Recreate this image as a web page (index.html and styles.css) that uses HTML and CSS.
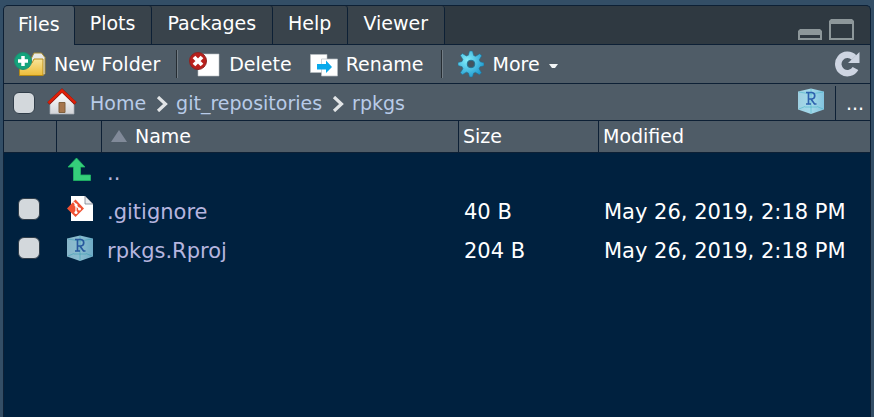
FILE: index.html
```html
<!DOCTYPE html>
<html lang="en">
<head>
<meta charset="utf-8">
<title>Files</title>
<link rel="stylesheet" href="styles.css">
</head>
<body>
<svg class="defs" width="0" height="0" aria-hidden="true">
  <defs>
    <linearGradient id="cube" x1="0" x2="1"><stop offset="0" stop-color="#9fd0e2"/><stop offset=".5" stop-color="#a3d9ea"/><stop offset="1" stop-color="#82c3de"/></linearGradient>
    <symbol id="project" viewBox="0 0 26 26">
      <path d="M13 0.500 26 3.500V21.500L13 26 0 21.500V3.500Z" fill="url(#cube)"/>
      <path d="M1 4 13 6 25 4M1 21 7 18.500M25 21 19 18.500M13 1V25.500M7 19h12" fill="none" stroke="#3fb3c4" stroke-width=".7" opacity=".75"/>
      <path d="M8 4.500H14a3.300 3.300 0 0 1 0 6.500H10.500M10.500 4.500V16M8 16h5M13 11l3.500 5H18.500" fill="none" stroke="#2e62ae" stroke-width="1.700"/>
    </symbol>
  </defs>
</svg>
<main class="pane">
  <header class="tabs">
    <div class="tablist" role="tablist">
      <button class="tab active" role="tab" aria-selected="true">Files</button>
      <button class="tab" role="tab">Plots</button>
      <button class="tab" role="tab">Packages</button>
      <button class="tab" role="tab">Help</button>
      <button class="tab" role="tab">Viewer</button>
    </div>
    <div class="window-buttons">
      <button aria-label="Minimize"><svg width="24" height="22" viewBox="0 0 24 22"><path d="M0 22V13l2-2H22l2 2V22Z" fill="#8d979a"/><path d="M2 17H22V20H2Z" fill="#2f3941"/></svg></button>
      <button aria-label="Maximize"><svg width="25" height="22" viewBox="0 0 25 22"><path d="M0 22V3l2-2H23l2 2V22Z" fill="#8d979a"/><path d="M2 6H23V20H2Z" fill="#2f3941"/></svg></button>
    </div>
  </header>

  <div class="toolbar" role="toolbar">
    <button class="tool">
      <svg width="33" height="26" viewBox="0 0 33 26">
        <defs><linearGradient id="folder" x2="0" y2="1"><stop stop-color="#f8e49a"/><stop offset="1" stop-color="#edbc38"/></linearGradient></defs>
        <path d="M17 8 20 2H27.500l3.500 4.500V22.500l-2 2H17Z" fill="#e7e8e5" stroke="#a58a31"/>
        <path d="M5.500 12H18L20 8H29V24.500H5.500Z" fill="url(#folder)" stroke="#b58a16"/>
        <circle cx="9" cy="10" r="8.500" fill="#14a37c" stroke="#208c70"/>
        <path d="M9 5V15M4 10H14" stroke="#fff" stroke-width="3.500"/>
      </svg><span>New Folder</span>
    </button>
    <i class="divider"></i>
    <button class="tool delete">
      <svg width="31" height="26" viewBox="0 0 31 26">
        <path d="M9 3H30V25H9Z" fill="#fff" stroke="#b8c0c5" stroke-width=".6"/>
        <circle cx="9" cy="10" r="8.500" fill="#b9201c" stroke="#8d2422"/>
        <path d="M5 6l8 8M13 6l-8 8" stroke="#fff" stroke-width="3.800"/>
      </svg><span>Delete</span>
    </button>
    <button class="tool rename">
      <svg width="28" height="26" viewBox="0 0 28 26">
        <path d="M.5 3.500H17V21.500H.5Z" fill="#fff" stroke="#bac1c5" stroke-width=".6"/>
        <path d="M11.500 8H27.500V25H11.500Z" fill="#fff" stroke="#b4bcc1" stroke-width=".7"/>
        <path d="M7 13H16V9.500L22 16 16 22V18.500H7Z" fill="#08a9eb"/>
      </svg><span>Rename</span>
    </button>
    <i class="divider"></i>
    <button class="tool more">
      <svg width="26" height="28" viewBox="0 0 26 28">
        <defs><radialGradient id="gear" cx=".35" cy=".35" r=".7"><stop stop-color="#82edfa"/><stop offset="1" stop-color="#209bd0"/></radialGradient></defs>
        <path fill="url(#gear)" stroke="#236e91" stroke-width=".6" d="M11.500 1h3l1.200 4.500 2 .8 4-2.500 2 2-2.400 4 .9 2 3.800 1v3l-4 1-.9 2 2.400 4-2 2-4-2.400-1.900.8-1.100 3.800h-3l-1.100-4-2-.8-4 2.500-2-2 2.500-4-.8-2L0 15.500v-3l4-1 .9-2-2.500-4 2-2 4 2.500 2-.8Z"/>
        <circle cx="13" cy="14" r="3.800" fill="#44545f" stroke="#237596"/>
      </svg><span>More</span>
      <svg class="caret" width="9" height="5" viewBox="0 0 9 5"><path d="M0 0H9L6 4H3Z" fill="#f2f5f6"/></svg>
    </button>
    <button class="refresh" aria-label="Refresh"><svg width="25" height="26" viewBox="0 0 25 26"><path d="M20.500 17.500A9.200 9.200 0 1 1 19 6.500" fill="none" stroke="#ced5e2" stroke-width="6.500"/><path d="M24.500 1V12H13Z" fill="#ced5e2"/></svg></button>
  </div>

  <nav class="path" aria-label="Folder path">
    <input type="checkbox" aria-label="Select all">
    <svg class="house" width="30" height="27" viewBox="0 0 30 27">
      <defs><linearGradient id="wall" x2="0" y2="1"><stop stop-color="#fff"/><stop offset="1" stop-color="#d2d4d8"/></linearGradient></defs>
      <path d="M3 14 15 4 27 14V26H3Z" fill="url(#wall)" stroke="#a6aeb4" stroke-width=".7"/>
      <path d="M12 14.500h6V24.500h-6Z" fill="#a6764d" stroke="#81613f"/>
      <path d="M1.500 15.500 15 2.500 28.500 15.500" fill="none" stroke="#85120b" stroke-width="3.400"/>
      <path d="M1.500 15 15 2.500 28.500 15" fill="none" stroke="#df2009" stroke-width="2.400"/>
    </svg>
    <a href="#">Home</a>
    <svg class="chevron" width="12" height="16" viewBox="0 0 12 16"><path d="M2 1 9.500 8 2 15" fill="none" stroke="#e1e4e6" stroke-width="3.200"/></svg>
    <a href="#">git_repositories</a>
    <svg class="chevron" width="12" height="16" viewBox="0 0 12 16"><path d="M2 1 9.500 8 2 15" fill="none" stroke="#e1e4e6" stroke-width="3.200"/></svg>
    <a href="#">rpkgs</a>
    <button class="project" aria-label="Project folder"><svg width="26" height="26"><use href="#project"/></svg></button>
    <button class="browse" aria-label="Browse">...</button>
  </nav>

  <table class="files">
    <colgroup><col class="c-check"><col class="c-icon"><col class="c-name"><col class="c-size"><col></colgroup>
    <thead>
      <tr><th></th><th></th><th class="name"><svg width="16" height="13" viewBox="0 0 16 13"><path d="M8 0 16 12H0Z" fill="#818a99"/></svg>Name</th><th>Size</th><th>Modified</th></tr>
    </thead>
    <tbody>
      <tr>
        <td></td>
        <td class="icon"><svg width="26" height="26" viewBox="0 0 26 26"><path d="M9.500 1 18 10H13.500V18H23.500V23.500H6.500V10H1Z" fill="#35cf7b" stroke="#20b765" stroke-width=".8"/></svg></td>
        <td><a href="#">..</a></td><td></td><td></td>
      </tr>
      <tr>
        <td class="check"><input type="checkbox" aria-label="Select .gitignore"></td>
        <td class="icon"><svg width="26" height="26" viewBox="0 0 26 26"><path d="M4 0H18L26 8V25H4Z" fill="#fff"/><path d="M18 0V8H26Z" fill="#e9eaed" stroke="#777f8b" stroke-width=".8"/><path d="M8.500 3.500 17 12.500 8.500 21 0 12.500Z" fill="#f05133"/><path d="M6.500 6 9 8.500V17M9 9.500l3.500 3.500" fill="none" stroke="#fff" stroke-width="1.200"/><circle cx="9" cy="9" r="1.600" fill="#fff"/><circle cx="9" cy="16.500" r="1.600" fill="#fff"/><circle cx="12.500" cy="13" r="1.500" fill="#fff"/></svg></td>
        <td><a href="#">.gitignore</a></td><td>40 B</td><td>May 26, 2019, 2:18 PM</td>
      </tr>
      <tr>
        <td class="check"><input type="checkbox" aria-label="Select rpkgs.Rproj"></td>
        <td class="icon dim"><svg width="26" height="26"><use href="#project"/></svg></td>
        <td><a href="#">rpkgs.Rproj</a></td><td>204 B</td><td>May 26, 2019, 2:18 PM</td>
      </tr>
    </tbody>
  </table>
</main>
</body>
</html>
```
FILE: styles.css
```css
* { box-sizing: border-box; }
body {
  margin: 0;
  padding: 5px 3px 0;
  min-height: 100vh;
  display: flex;
  background: #334e66;
  color: #fff;
  font: 19px/24px "DejaVu Sans", sans-serif;
}
.defs { position: absolute; }
svg { display: block; flex: none; }
button {
  padding: 0;
  border: 0;
  background: none;
  color: inherit;
  font: inherit;
}
a { text-decoration: none; color: #b8cbe8; }
input[type="checkbox"] {
  appearance: none;
  display: block;
  flex: none;
  width: 22px;
  height: 22px;
  margin: 0;
  border: 1px solid #303d49;
  border-radius: 6px;
  background: #d3d8dc;
}
.pane {
  flex: 1;
  min-width: 0;
  border: 1px solid #0d2035;
  border-bottom: 0;
  border-radius: 5px 5px 0 0;
  background: #00213f;
  overflow: hidden;
}

.tabs {
  display: flex;
  justify-content: space-between;
  height: 39px;
  border-bottom: 1px solid #0d2035;
  background: #2f3941;
}
.tablist { display: flex; }
.tab {
  height: 38px;
  padding: 0 16px 4px 15px;
  border-right: 1px solid #0d2035;
  border-radius: 0 3px 0 0;
  background: #39434b;
}
.tab.active {
  height: 39px;
  padding: 0 14px 4px;
  background: #4f5c67;
}
.window-buttons {
  display: flex;
  align-items: flex-end;
  gap: 7px;
  padding: 0 16px 4px 0;
}

.toolbar {
  display: flex;
  align-items: center;
  height: 39px;
  padding: 0 10px;
  border-bottom: 1px solid #0d2035;
  background: #4f5c67;
}
.tool {
  display: flex;
  align-items: center;
  gap: 7px;
}
.delete { gap: 9px; }
.rename { margin-left: 18px; gap: 8px; }
.more { gap: 9px; }
.caret { margin-top: 4px; }
.divider {
  width: 2px;
  height: 28px;
  margin: 0 11px 0 16px;
  border-left: 1px solid #252c32;
  border-right: 1px solid #737d85;
}
.rename + .divider { margin: 0 15px 0 17px; }
.refresh { margin-left: auto; }

.path {
  display: flex;
  align-items: center;
  height: 37px;
  padding: 2px 0 0 9px;
  border-bottom: 1px solid #0d2035;
  background: #4f5c67;
}
.house { margin: 0 13px 4px 12px; }
.path .chevron { margin: 2px 8px 0 10px; }
.project { margin: 0 11px 4px auto; }
.browse {
  align-self: stretch;
  width: 35px;
  padding-left: 4px;
  border-left: 1px solid #0d2035;
}

.files {
  width: 100%;
  table-layout: fixed;
  border-collapse: separate;
  border-spacing: 0;
}
.c-check { width: 53px; }
.c-icon { width: 45px; }
.c-name { width: 357px; }
.c-size { width: 140px; }
th {
  height: 32px;
  padding: 0 4px 2px;
  border-right: 1px solid #0d2035;
  border-bottom: 1px solid #0d2035;
  background: #4f5c67;
  font-weight: normal;
  text-align: left;
}
th:last-child { border-right: 0; }
.name { padding-left: 9px; }
.name svg { display: inline-block; margin-right: 8px; }
td {
  height: 39px;
  padding: 0 0 0 5px;
  font-size: 21px;
  white-space: nowrap;
}
td a { color: #b6b5df; }
.check { padding: 0 0 6px 14px; }
.icon { padding: 0 0 6px 10px; }
.dim { opacity: .85; }
```
